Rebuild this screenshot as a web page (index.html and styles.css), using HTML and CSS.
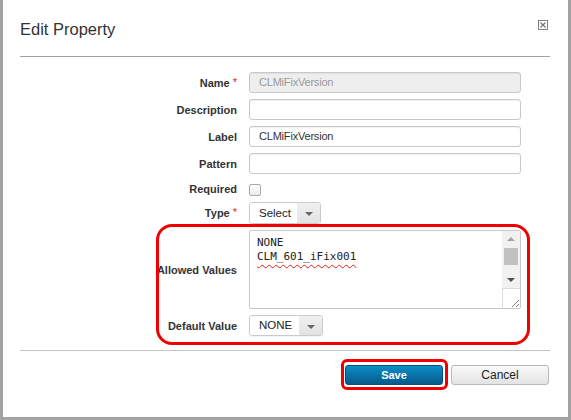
FILE: index.html
```html
<!DOCTYPE html>
<html>
<head>
<meta charset="utf-8">
<link rel="stylesheet" href="styles.css">
</head>
<body>
<div class="dialog">
  <div class="header">
    <h1 class="title">Edit Property</h1>
    <span class="close" aria-label="Close">
      <svg width="10" height="10" viewBox="0 0 10 10">
        <rect x="0.5" y="0.5" width="9" height="9" fill="#fff" stroke="#808080"/>
        <path d="M2.5 2.5 L7.5 7.5 M7.5 2.5 L2.5 7.5" stroke="#707070" stroke-width="1.1"/>
      </svg>
    </span>
  </div>

  <div class="form">
    <div class="lbl">Name<span class="req">*</span></div>
    <div class="text disabled">CLMiFixVersion</div>

    <div class="lbl">Description</div>
    <div class="text"></div>

    <div class="lbl">Label</div>
    <div class="text">CLMiFixVersion</div>

    <div class="lbl">Pattern</div>
    <div class="text"></div>

    <div class="lbl lbl-check">Required</div>
    <div class="check-cell"><span class="check"></span></div>

    <div class="lbl">Type<span class="req">*</span></div>
    <div class="select sel-type"><span class="sel-text">Select</span><span class="sel-arrow"></span></div>

    <div class="lbl">Allowed Values</div>
    <div class="area">
      <div class="area-text">
        <div>NONE</div>
        <div><span class="spell">CLM_601_iFix001</span></div>
      </div>
      <div class="scroll">
        <span class="sb-btn"><span class="tri-up"></span></span>
        <span class="sb-track"><span class="sb-thumb"></span></span>
        <span class="sb-btn"><span class="tri-down"></span></span>
        <span class="sb-corner">
          <svg width="8" height="8" viewBox="0 0 8 8"><path d="M1 8 L8 1 M5 8 L8 5" stroke="#888" stroke-width="1"/></svg>
        </span>
      </div>
    </div>

    <div class="lbl">Default Value</div>
    <div class="select sel-default"><span class="sel-text">NONE</span><span class="sel-arrow"></span></div>
  </div>

  <div class="footer">
    <button class="btn primary">Save</button>
    <button class="btn">Cancel</button>
  </div>

  <div class="mark mark-values"></div>
  <div class="mark mark-save"></div>
</div>
</body>
</html>
```

FILE: styles.css
```css
* { box-sizing: border-box; }
html, body { margin: 0; padding: 0; background: #fff; }
body { font-family: "Liberation Sans", Arial, sans-serif; color: #333; }

.dialog {
  position: relative;
  width: 571px;
  height: 420px;
  background: #fff;
  border: 3px solid #a3a3a3;
  border-top: none;
}

.header {
  display: flex;
  justify-content: space-between;
  align-items: flex-start;
  height: 57px;
  margin: 0 18px 0 17px;
  border-bottom: 1px solid #a0a0a0;
}
.title {
  margin: 19px 0 0 0;
  font-size: 16.5px;
  line-height: 20px;
  font-weight: normal;
  color: #333;
}
.close {
  display: block;
  width: 10px;
  height: 10px;
  margin: 20px 2px 0 0;
}
.close svg { display: block; }

.form {
  display: grid;
  grid-template-columns: 234px 272px;
  column-gap: 12px;
  row-gap: 6px;
  padding: 15px 0 14px 0;
}
.lbl {
  align-self: center;
  justify-self: end;
  font-size: 11px;
  font-weight: bold;
  color: #333;
  white-space: nowrap;
}
.req {
  color: #d9251d;
  font-weight: normal;
  margin-left: 3px;
  font-size: 11px;
  position: relative;
  top: -1px;
}

.text {
  height: 21px;
  border: 1px solid #c8c8c8;
  border-radius: 3px;
  box-shadow: inset 0 1px 1px rgba(0,0,0,0.06);
  font-size: 11px;
  line-height: 19px;
  padding-left: 9px;
  color: #333;
  letter-spacing: -0.2px;
}
.text.disabled { background: #eee; color: #999; }

.check-cell { height: 16px; padding-top: 4px; }
.check {
  display: block;
  width: 12px;
  height: 12px;
  border: 1px solid #a9a9a9;
  border-radius: 2px;
  background: linear-gradient(#fff, #ececec);
}
.lbl-check { align-self: end; line-height: 12px; margin-bottom: 1px; }

.select {
  display: flex;
  height: 22px;
  border: 1px solid #cacaca;
  border-radius: 3px;
  overflow: hidden;
  box-shadow: 0 1px 1px rgba(0,0,0,0.05);
  font-size: 11.5px;
  color: #222;
}
.sel-type { width: 72px; }
.sel-default { width: 74px; height: 21px; }
.sel-text {
  flex: 1;
  padding-left: 9px;
  line-height: 20px;
  background: #fff;
}
.sel-default .sel-text { line-height: 19px; }
.sel-arrow {
  position: relative;
  width: 23px;
  background: linear-gradient(#f0f0f0, #e2e2e2);
}
.sel-arrow::after {
  content: "";
  position: absolute;
  left: 8px;
  top: 9px;
  border-left: 4px solid transparent;
  border-right: 4px solid transparent;
  border-top: 4px solid #666;
}

.area {
  display: flex;
  height: 79px;
  border: 1px solid #c8c8c8;
  border-radius: 2px;
}
.area-text {
  flex: 1;
  padding: 5px 0 0 7px;
  font-family: "DejaVu Sans Mono", "Liberation Mono", monospace;
  font-size: 11px;
  line-height: 14px;
  color: #222;
}
.spell {
  text-decoration: underline wavy #e02020;
  text-decoration-thickness: 1px;
  text-decoration-skip-ink: none;
  text-underline-offset: 4px;
}
.scroll {
  display: flex;
  flex-direction: column;
  width: 18px;
  background: #f1f1f1;
}
.sb-btn {
  position: relative;
  height: 15px;
}
.tri-up, .tri-down {
  position: absolute;
  left: 5px;
  width: 0; height: 0;
  border-left: 4px solid transparent;
  border-right: 4px solid transparent;
}
.tri-up { top: 6px; border-bottom: 4px solid #a3a3a3; }
.tri-down { top: 5px; border-top: 4px solid #505050; }
.sb-track { flex: 1; padding: 2px 2px 0 2px; }
.sb-thumb {
  display: block;
  height: 17px;
  background: #c1c1c1;
}
.sb-corner {
  height: 20px;
  background: #fff;
  border-top: 1px solid #dcdcdc;
  border-left: 1px solid #dcdcdc;
  display: flex;
  align-items: flex-end;
  justify-content: flex-end;
  padding: 0 1px 1px 0;
}
.sb-corner svg { display: block; }

.footer {
  display: flex;
  justify-content: flex-end;
  gap: 8px;
  margin: 0 18px 0 17px;
  padding: 14px 1px 0 0;
  border-top: 1px solid #c4c4c4;
}
.btn {
  width: 98px;
  height: 20px;
  padding: 0;
  border-radius: 3px;
  font-family: "Liberation Sans", Arial, sans-serif;
  font-size: 12px;
  cursor: pointer;
}
.btn.primary {
  background: linear-gradient(#0b8dc6, #075a8b);
  border: 1px solid #064f7b;
  color: #fff;
  font-weight: bold;
  font-size: 11px;
}
.btn:not(.primary) {
  background: linear-gradient(#fafafa, #e3e3e3);
  border: 1px solid #b9b9b9;
  color: #222;
}

.mark {
  position: absolute;
  border: 3px solid #f00000;
  pointer-events: none;
}
.mark-values {
  left: 153px;
  top: 224px;
  width: 374px;
  height: 121px;
  border-radius: 16px;
}
.mark-save {
  left: 338px;
  top: 359px;
  width: 107px;
  height: 31px;
  border-radius: 6px;
}
```
